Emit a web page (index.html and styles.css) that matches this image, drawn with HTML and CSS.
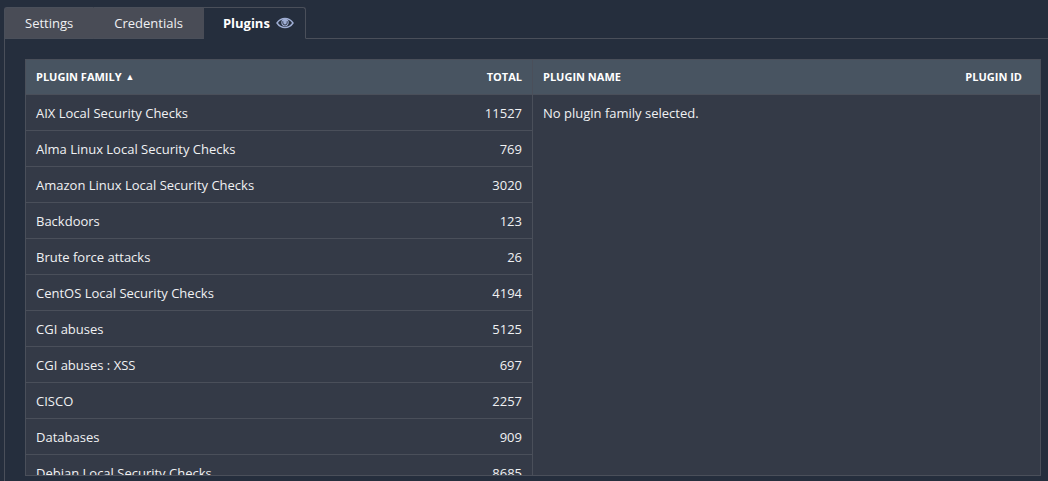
FILE: index.html
```html
<!DOCTYPE html>
<html lang="en">
<head>
<meta charset="utf-8">
<title>Plugins</title>
<link rel="stylesheet" href="styles.css">
</head>
<body>
<main class="editor">
  <nav class="tabs">
    <a class="tab tab-first" href="#settings">Settings</a>
    <a class="tab" href="#credentials">Credentials</a>
    <a class="tab tab-active" href="#plugins" aria-current="page">Plugins
      <svg class="eye" viewBox="0 0 18 12" aria-hidden="true">
        <path d="M1 6C3 3 5.700 1.500 9 1.500s6 1.500 8 4.500c-2 3-4.700 4.500-8 4.500S3 9 1 6z" fill="none" stroke="currentColor" stroke-width="1.400"/>
        <circle cx="9" cy="5.500" r="3.700" fill="currentColor"/>
        <path d="M6.800 4.300v1.500A2.200 2.200 0 0 0 11.200 5.800V4.300" fill="none" stroke="#252e3d" stroke-width="0.900"/>
      </svg>
    </a>
    <span class="tabs-rest"></span>
  </nav>
  <section class="content">
    <div class="panes">
      <div class="pane families">
        <table class="grid">
          <thead><tr><th scope="col">PLUGIN FAMILY<span class="sort">▲</span></th><th scope="col" class="num">TOTAL</th></tr></thead>
          <tbody>
            <tr><td>AIX Local Security Checks</td><td class="num">11527</td></tr>
            <tr><td>Alma Linux Local Security Checks</td><td class="num">769</td></tr>
            <tr><td>Amazon Linux Local Security Checks</td><td class="num">3020</td></tr>
            <tr><td>Backdoors</td><td class="num">123</td></tr>
            <tr><td>Brute force attacks</td><td class="num">26</td></tr>
            <tr><td>CentOS Local Security Checks</td><td class="num">4194</td></tr>
            <tr><td>CGI abuses</td><td class="num">5125</td></tr>
            <tr><td>CGI abuses : XSS</td><td class="num">697</td></tr>
            <tr><td>CISCO</td><td class="num">2257</td></tr>
            <tr><td>Databases</td><td class="num">909</td></tr>
            <tr><td>Debian Local Security Checks</td><td class="num">8685</td></tr>
          </tbody>
        </table>
      </div>
      <div class="pane plugins">
        <table class="grid">
          <thead><tr><th scope="col">PLUGIN NAME</th><th scope="col" class="num">PLUGIN ID</th></tr></thead>
          <tbody><tr class="empty"><td colspan="2">No plugin family selected.</td></tr></tbody>
        </table>
      </div>
    </div>
  </section>
</main>
</body>
</html>
```
FILE: styles.css
```css
* { box-sizing: border-box; }

body {
  margin: 0;
  background: #252e3d;
  color: #f0f1f3;
  font: 13px/20px "Open Sans", "Noto Sans", sans-serif;
}

.editor {
  display: flex;
  flex-direction: column;
  height: 100vh;
  padding: 7px 0 0 4px;
}

.tabs { display: flex; height: 32px; }

.tab {
  display: flex;
  align-items: center;
  gap: 6px;
  padding: 0 20px;
  background: #494c56;
  border-top: 1px solid #4a4f5a;
  border-bottom: 1px solid #4a4f5a;
  border-right: 1px solid #494c56;
  color: #f0f1f3;
  text-decoration: none;
}

.tab-first {
  border-left: 1px solid #4a4f5a;
  border-top-left-radius: 3px;
}

.tab-active {
  padding: 0 11px 0 19px;
  background: #252e3d;
  border-right-color: #4a4f5a;
  border-bottom-color: #252e3d;
  border-top-right-radius: 3px;
  color: #fff;
  font-weight: 700;
}

.eye { width: 18px; height: 12px; color: #9faed4; }

.tabs-rest { flex: 1; border-bottom: 1px solid #4a4f5a; }

.content {
  flex: 1;
  min-height: 0;
  padding: 20px 7px 5px 20px;
  border-left: 1px solid #4a4f5a;
}

.panes {
  display: flex;
  height: 100%;
  overflow: hidden;
  background: #343a47;
  border: 1px solid #4a4f5a;
}

.pane { overflow: hidden; }

.families { width: calc(50% - 1px); }

.plugins { flex: 1; border-left: 1px solid #4a4f5a; }

.grid { width: 100%; border-collapse: separate; border-spacing: 0; }

th, td {
  height: 36px;
  padding: 0 10px;
  border-bottom: 1px solid #4a4f5a;
  text-align: left;
}

th {
  height: 35px;
  background: #485461;
  color: #fff;
  font-size: 11px;
  font-weight: 700;
}

.num { text-align: right; }

.plugins th.num { padding-right: 18px; }

.empty td { border-bottom: 0; }

.sort { margin-left: 4px; font-size: 9px; vertical-align: top; }
```
